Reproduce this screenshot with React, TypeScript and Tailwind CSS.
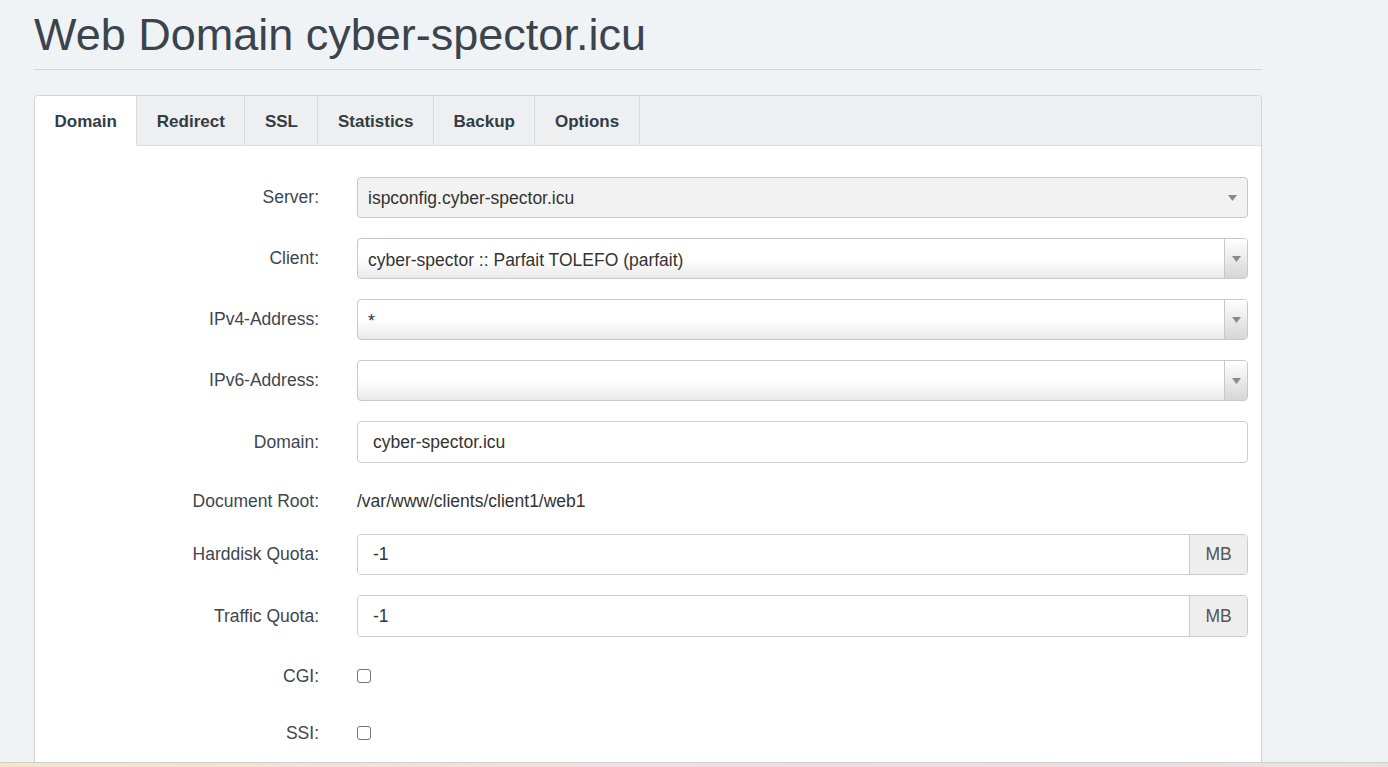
import React from 'react';

const tabs = ['Domain', 'Redirect', 'SSL', 'Statistics', 'Backup', 'Options'];

const Caret = () => (
  <svg width="9" height="6" viewBox="0 0 9 6" className="block">
    <path d="M0 0 L9 0 L4.5 6 Z" fill="#8a8a8a" />
  </svg>
);

const Row = ({ label, h = 'h-[41px]', align = 'items-center', children }: { label: string; h?: string; align?: string; children?: React.ReactNode }) => (
  <div className={`flex ${align} ${h} mb-[20px]`}>
    <div className="w-[284px] text-right text-[#3d4650]">{label}</div>
    <div className={`ml-[38px] w-[891px] h-full flex ${align}`}>{children}</div>
  </div>
);

const GradSelect = ({ value }: { value: string }) => (
  <div className="w-full h-full flex border border-[#c8c8c8] rounded-[4px] overflow-hidden bg-gradient-to-b from-white from-50% to-[#e9e9e9]">
    <div className="flex-1 pl-[10px] pt-[8px] text-[#333]">{value}</div>
    <div className="w-[23px] border-l border-[#c8c8c8] flex items-center justify-center bg-gradient-to-b from-white to-[#d6d6d6]">
      <Caret />
    </div>
  </div>
);

const QuotaInput = ({ value }: { value: string }) => (
  <div className="w-full h-full flex border border-[#cccccc] rounded-[4px] overflow-hidden">
    <div className="flex-1 bg-white pl-[15px] flex items-center text-[#333]">{value}</div>
    <div className="w-[58px] border-l border-[#cccccc] bg-[#eeeeee] text-[#555] flex items-center justify-center">MB</div>
  </div>
);

const Check = () => (
  <div className="w-[14px] h-[14px] border border-[#767676] rounded-[3px] bg-white" />
);

export default function App() {
  return (
    <div className="h-[767px] flex flex-col bg-[#eff3f6] overflow-hidden font-['Liberation_Sans',Arial,sans-serif] text-[17.5px]">
      <div className="flex-1 overflow-hidden pl-[34px]">
        <div className="w-[1228px]">
          <h1 className="text-[45px] leading-none text-[#3b444c] pt-[12px] pb-[12px]">Web Domain cyber-spector.icu</h1>
          <div className="h-px bg-[#d0d4d8]" />
          <div className="mt-[25px] border border-[#d3d3d3] rounded-t-[4px] bg-white">
            <div className="flex h-[50px] bg-[#eeeff1] border-b border-[#dddddd] rounded-t-[4px]">
              {tabs.map((t, i) => (
                <div
                  key={t}
                  className={`px-[19.5px] pt-[2px] flex items-center text-[17px] font-bold text-[#333c44] border-r border-[#dadada] ${i === 0 ? 'bg-white -mb-px rounded-tl-[4px]' : ''}`}
                >
                  {t}
                </div>
              ))}
            </div>
            <div className="pt-[31px] pb-[20px]">
              <Row label="Server:">
                <div className="w-full h-full border border-[#c8c8c8] rounded-[4px] bg-[#f2f2f2] flex items-center justify-between pl-[10px] pr-[10px] pt-[1px] text-[#333]">
                  <span>ispconfig.cyber-spector.icu</span>
                  <Caret />
                </div>
              </Row>
              <Row label="Client:">
                <GradSelect value="cyber-spector :: Parfait TOLEFO (parfait)" />
              </Row>
              <Row label="IPv4-Address:">
                <GradSelect value="*" />
              </Row>
              <Row label="IPv6-Address:">
                <GradSelect value="" />
              </Row>
              <Row label="Domain:" h="h-[42px]">
                <div className="w-full h-full border border-[#cccccc] rounded-[4px] bg-white pl-[15px] flex items-center text-[#333]">cyber-spector.icu</div>
              </Row>
              <Row label="Document Root:" h="h-[31px]" align="items-end">
                <span className="text-[#333]">/var/www/clients/client1/web1</span>
              </Row>
              <Row label="Harddisk Quota:" h="h-[41px]">
                <QuotaInput value="-1" />
              </Row>
              <Row label="Traffic Quota:" h="h-[42px]">
                <QuotaInput value="-1" />
              </Row>
              <Row label="CGI:" h="h-[38px]">
                <Check />
              </Row>
              <Row label="SSI:" h="h-[36px]">
                <Check />
              </Row>
            </div>
          </div>
        </div>
      </div>
      <div className="h-[5px] border-t border-[#cfcfcf] bg-gradient-to-r from-[#f3e6c8] via-[#f2dde2] to-[#eedfdc]" />
    </div>
  );
}
